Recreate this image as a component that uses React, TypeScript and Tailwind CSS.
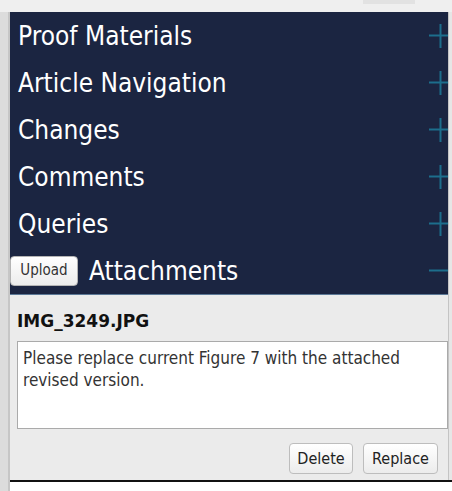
import React from "react";

const font = "font-['DejaVu_Sans_Condensed','DejaVu_Sans',sans-serif]";

const sections = ["Proof Materials", "Article Navigation", "Changes", "Comments", "Queries"];

const Plus = () => (
  <svg width="23" height="24" viewBox="0 0 23 24" className="shrink-0">
    <path d="M0 11.5H23M11.5 0V24" stroke="#1d6e8c" strokeWidth="2" />
  </svg>
);

const Minus = () => (
  <svg width="23" height="24" viewBox="0 0 23 24" className="shrink-0">
    <path d="M0 11.5H23" stroke="#1d6e8c" strokeWidth="2" />
  </svg>
);

const App = () => {
  return (
    <div className={`w-[452px] h-[491px] bg-white overflow-hidden flex flex-col ${font}`}>
      <div className="h-[12px] bg-[#efefef] flex shrink-0">
        <div className="ml-[363px] w-[52px] h-[4px] bg-[#e2e2e2]" />
      </div>
      <div className="flex flex-1">
        <div className="w-[10px] flex">
          <div className="w-[8px] bg-[#dcdcdc]" />
          <div className="w-[2px] bg-[#c6c6c6]" />
        </div>
        <div className="flex flex-col w-[442px]">
          <div className="flex">
            <div className="w-[438px] flex flex-col">
              <div className="bg-[#1b2541] overflow-hidden">
                {sections.map((s) => (
                  <div key={s} className="h-[47px] flex items-center justify-between pl-[8px] mr-[-4px]">
                    <span className="text-white text-[26px] leading-none">{s}</span>
                    <Plus />
                  </div>
                ))}
                <div className="h-[47px] flex items-center justify-between mr-[-4px]">
                  <div className="flex items-center gap-[11px]">
                    <button className="h-[30px] w-[68px] rounded-[4px] border border-[#b4b4b4] bg-gradient-to-b from-white to-[#ececec] text-[#333] text-[15px]">
                      Upload
                    </button>
                    <span className="text-white text-[26px] leading-none">Attachments</span>
                  </div>
                  <Minus />
                </div>
              </div>
              <div className="h-[1px] bg-[#5b7896]" />
              <div className="h-[185px] bg-[#ebebeb] pl-[7px] pt-[18px] flex flex-col">
                <div className="font-['DejaVu_Sans',sans-serif] text-[17px] font-bold text-[#111] leading-none h-[28px]">
                  IMG_3249.JPG
                </div>
                <div className="h-[88px] bg-white border border-[#aaa] px-[5px] pt-[5px] text-[17px] leading-[22px] text-[#333]">
                  Please replace current Figure 7 with the attached revised version.
                </div>
                <div className="flex justify-end gap-[10px] mt-[14px] pr-[10px]">
                  <button className="h-[31px] w-[64px] rounded-[4px] border border-[#bdbdbd] bg-gradient-to-b from-white to-[#ececec] text-[#222] text-[16px]">
                    Delete
                  </button>
                  <button className="h-[31px] w-[75px] rounded-[4px] border border-[#bdbdbd] bg-gradient-to-b from-white to-[#ececec] text-[#222] text-[16px]">
                    Replace
                  </button>
                </div>
              </div>
            </div>
            <div className="w-[4px] flex">
              <div className="w-[1px] bg-[#c4c4c4]" />
              <div className="flex-1 bg-[#e6e6e6]" />
            </div>
          </div>
          <div className="h-[2px] bg-[#111]" />
          <div className="flex-1 bg-white" />
        </div>
      </div>
    </div>
  );
};

export default App;
